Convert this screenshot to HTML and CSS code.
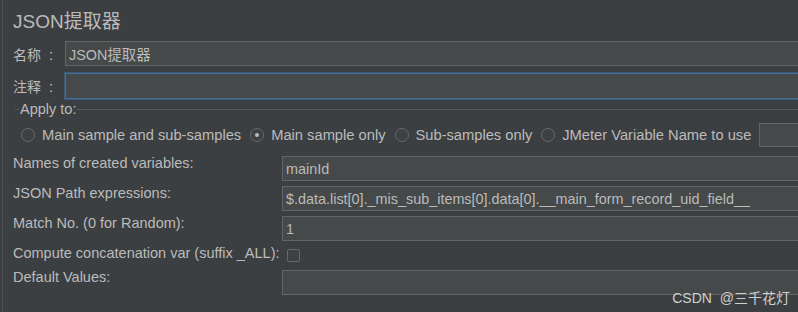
FILE: index.html
```html
<!DOCTYPE html>
<html lang="zh-CN">
<head>
    <meta charset="UTF-8">
    <title>JSON提取器</title>
    <link rel="stylesheet" href="styles.css">
</head>
<body>

    <!-- Extractor panel -->
    <div class="panel">
        <h1 class="title">JSON提取器</h1>

        <div class="field-row">
            <label class="field-label">名称<span class="colon">:</span></label>
            <input class="text-input" type="text" value="JSON提取器">
        </div>

        <div class="field-row comment-row">
            <label class="field-label">注释<span class="colon">:</span></label>
            <input class="text-input focused" type="text" value="">
        </div>

        <!-- Apply to -->
        <fieldset class="apply">
            <legend>Apply to:</legend>
            <div class="radio-row">
                <span class="radio-item"><span class="radio"></span>Main sample and sub-samples</span>
                <span class="radio-item"><span class="radio checked"></span>Main sample only</span>
                <span class="radio-item"><span class="radio"></span>Sub-samples only</span>
                <span class="radio-item"><span class="radio"></span>JMeter Variable Name to use</span>
                <input class="text-input var-input" type="text" value="">
            </div>
        </fieldset>

        <!-- Extractor settings -->
        <div class="props">
            <label class="prop-label">Names of created variables:</label>
            <input class="text-input" type="text" value="mainId">

            <label class="prop-label">JSON Path expressions:</label>
            <input class="text-input" type="text" value="$.data.list[0]._mis_sub_items[0].data[0].__main_form_record_uid_field__">

            <label class="prop-label">Match No. (0 for Random):</label>
            <input class="text-input" type="text" value="1">

            <label class="prop-label">Compute concatenation var (suffix _ALL):</label>
            <span class="checkbox"></span>

            <label class="prop-label">Default Values:</label>
            <input class="text-input" type="text" value="">
        </div>
    </div>

    <div class="watermark">CSDN @三千花灯</div>

</body>
</html>
```

FILE: styles.css
```css
* {
    margin: 0;
    padding: 0;
    box-sizing: border-box;
}

body {
    font-family: "Liberation Sans", "Noto Sans CJK SC", sans-serif;
    font-size: 14.5px;
    background-color: #3c3f41;
    color: #bbbbbb;
    overflow: hidden;
    height: 312px;
}

/* Panel */
.panel {
    margin-left: 2px;
    border-left: 1px solid #4d5052;
    padding-left: 10px;
    height: 312px;
    overflow: hidden;
}

.title {
    font-size: 19px;
    font-weight: normal;
    line-height: 24px;
    padding-top: 10px;
    color: #bbbbbb;
}

.field-row {
    display: flex;
    align-items: center;
    margin-top: 7px;
    height: 25px;
}

.comment-row {
    margin-top: 7px;
    height: 26px;
}

.field-label {
    width: 52px;
    flex-shrink: 0;
    font-size: 14px;
}

.colon {
    margin-left: 8px;
    font-size: 15px;
}

/* Inputs */
.text-input {
    flex: 1;
    height: 25px;
    margin-right: -20px;
    padding: 0 3px;
    font: inherit;
    font-size: 14.4px;
    color: #bbbbbb;
    background-color: #45494a;
    border: 1px solid #646464;
    outline: none;
}

.focused {
    height: 26px;
    border-color: #4b6e97;
    box-shadow: 0 0 0 1px #3a5a7d;
}

/* Apply to */
.apply {
    margin: 2px 0 0 2px;
    padding: 0;
    border: none;
    border-top: 1px solid #56595b;
}

.apply legend {
    margin-left: 4px;
    padding: 0 1px;
    line-height: 16px;
}

.radio-row {
    display: flex;
    align-items: center;
    height: 24px;
    margin-top: 6px;
    padding-left: 6px;
    gap: 9px;
    font-size: 14.7px;
}

.radio-item {
    display: flex;
    align-items: center;
    gap: 7px;
    white-space: nowrap;
}

.radio {
    display: flex;
    align-items: center;
    justify-content: center;
    width: 14px;
    height: 14px;
    border-radius: 50%;
    border: 1px solid #66696b;
    background-color: #3e4143;
}

.radio.checked::after {
    content: "";
    width: 4px;
    height: 4px;
    border-radius: 50%;
    background-color: #bbbbbb;
}

.var-input {
    height: 24px;
    margin-left: -1px;
}

/* Settings grid */
.props {
    display: grid;
    grid-template-columns: 269px 1fr;
    row-gap: 5px;
    margin-top: 9px;
}

.prop-label {
    line-height: 15px;
    white-space: nowrap;
    align-self: start;
}

.props .text-input {
    margin-right: -20px;
}

.checkbox {
    width: 13px;
    height: 13px;
    margin: 3px 0 3px 5px;
    border: 1px solid #66696b;
    border-radius: 2px;
    background-color: #3e4143;
}

/* Watermark */
.watermark {
    position: absolute;
    right: 8px;
    top: 290px;
    font-size: 14px;
    line-height: 16px;
    word-spacing: 4px;
    color: #cfcfcf;
}
```
